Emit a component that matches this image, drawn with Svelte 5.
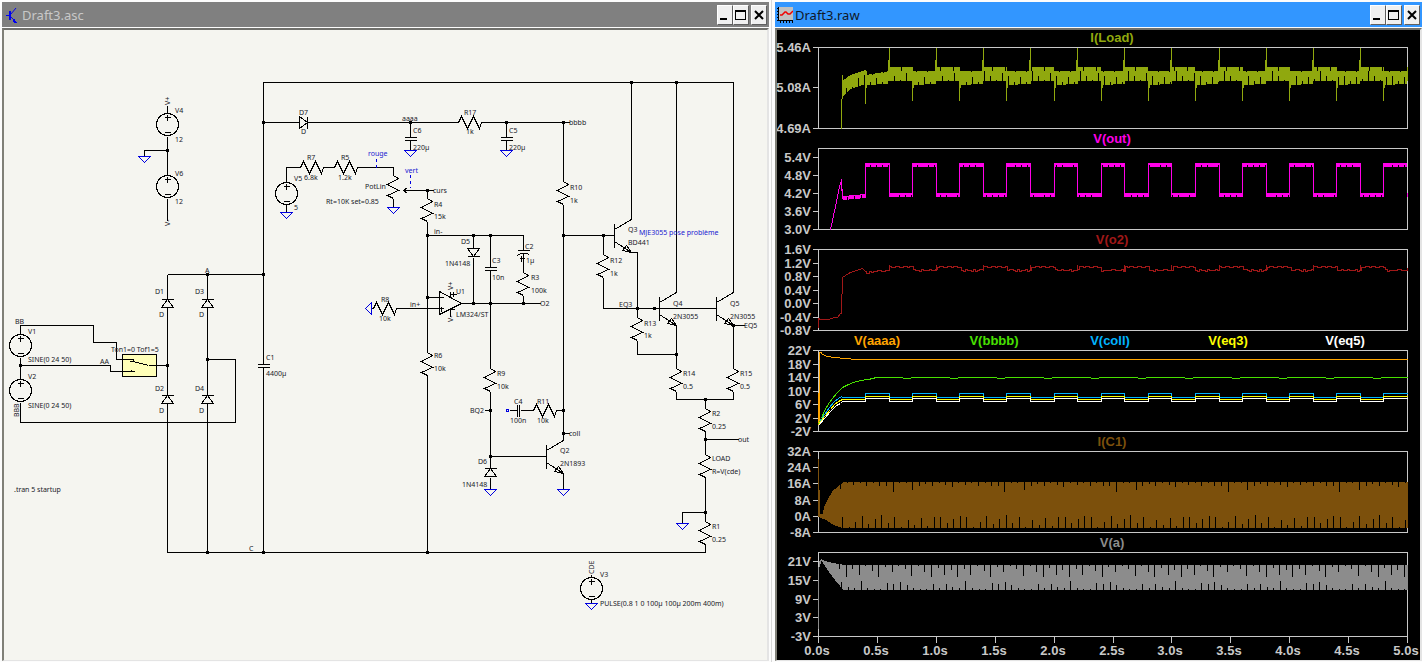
<script lang="ts">
  // ---------- schematic ----------
  const wires = [
    // supply V4 / V6
    'M167 105V113M167 136V175M167 150H144V156M167 198V220',
    // rectifier and transformer
    'M167 274H263M167 274V299M167 307V395M167 403V552H263M207 274V299M207 307V395M207 403V552',
    'M20 334V325H93V342H116V359H133M20 357V379M20 365H110V371H133M148 365H167M207 359H235V422H20V402',
    // rails
    'M263 364V82H733V292M263 367V552H705V543M631 82V219M676 82V292',
    // reference line
    'M263 122H299M307 122H458M481 122H569M410 122V137M410 140V150M506 122V137M506 140V150M563 122V181',
    'M286 182V167H300M323 167H334M357 167H393V175M393 198V207M286 204V212M403 190H433M427 190V198',
    // op-amp stage
    'M427 221V352M427 374V552M427 235H523V250M473 235V248M473 257V303M490 235V267M490 270V368M523 253V272M523 295V303',
    'M461 303H540M427 297H443M396 308H443M371 308H373M450 291V297M450 309V316',
    'M490 391V468M484 410H490M490 456H546M490 477V489M509 410H517M520 410H533M556 410H563',
    'M563 204V440M563 433H569M563 473V489',
    // output stage
    'M563 235H614M603 235V254M603 277V308H716M631 252H637V317M637 340V354H676M676 325V368M733 325V368M733 325H744',
    'M676 391V399H733V391M705 399V408M705 430V454M705 439H738M705 476V521M705 512H682V523',
    'M591 574V577M591 599V603'
  ];

  const nodes = [
    [167, 150], [263, 122], [263, 274], [207, 274], [167, 365], [207, 359], [20, 365],
    [207, 552], [263, 552], [427, 552], [410, 122], [506, 122], [563, 122], [427, 190],
    [427, 235], [473, 235], [490, 235], [427, 297], [473, 303], [490, 303], [523, 303],
    [490, 410], [490, 456], [563, 235], [563, 410], [563, 433], [603, 235], [637, 308],
    [654, 308], [676, 354], [733, 325], [705, 399], [705, 439], [705, 512], [631, 82], [676, 82]
  ];

  const resistorsV = [
    [427, 198], [427, 352], [490, 368], [523, 272], [563, 181], [603, 254], [637, 317],
    [676, 368], [733, 368], [705, 408], [705, 454], [705, 521], [393, 175]
  ];
  const resistorsH = [[458, 122], [300, 167], [334, 167], [373, 308], [533, 410]];
  const sources = [[167, 124], [167, 186], [20, 345], [20, 390], [286, 193], [591, 588]];
  const grounds = [
    [144, 156], [410, 150], [506, 150], [286, 212], [393, 207], [490, 489], [563, 489], [682, 523], [591, 603]
  ];
  const diodesUp = [[167, 299], [207, 299], [167, 395], [207, 395], [490, 468]];
  const transistors = [[546, 456], [614, 235], [659, 308], [716, 308]];
  const capacitors = [[410, 137], [506, 137], [490, 267], [263, 364]];

  type Label = [number, number, string];
  const labels: Label[] = [
    [175, 113, 'V4'], [175, 142, '12'], [175, 176, 'V6'], [175, 204, '12'],
    [205, 273, 'A'], [155, 294, 'D1'], [159, 317, 'D'], [195, 294, 'D3'], [199, 317, 'D'],
    [155, 391, 'D2'], [159, 413, 'D'], [195, 391, 'D4'], [199, 413, 'D'],
    [15, 324, 'BB'], [28, 334, 'V1'], [28, 362, 'SINE(0 24 50)'], [100, 364, 'AA'],
    [28, 379, 'V2'], [28, 408, 'SINE(0 24 50)'], [111, 352, 'Ton1=0 Tof1=5'],
    [14, 492, '.tran 5 startup'], [249, 551, 'C'], [266, 360, 'C1'], [266, 376, '4400µ'],
    [299, 115, 'D7'], [301, 134, 'D'], [402, 121, 'aaaa'], [413, 133, 'C6'], [413, 150, '220µ'],
    [509, 133, 'C5'], [509, 150, '220µ'], [464, 115, 'R17'], [466, 134, '1k'], [569, 125, 'bbbb'],
    [307, 160, 'R7'], [304, 180, '6.8k'], [294, 181, 'V5'], [294, 210, '5'], [341, 160, 'R5'],
    [338, 180, '1.2k'], [365, 189, 'PotLin'], [326, 204, 'Rt=10K set=0.85'], [433, 193, 'curs'],
    [434, 207, 'R4'], [434, 219, '15k'], [434, 234, 'in-'], [434, 358, 'R6'], [434, 371, '10k'],
    [461, 244, 'D5'], [445, 266, '1N4148'], [492, 263, 'C3'], [492, 280, '10n'], [525, 249, 'C2'],
    [526, 263, '1µ'], [531, 280, 'R3'], [531, 293, '100k'], [540, 306, 'O2'], [456, 294, 'U1'],
    [456, 317, 'LM324/ST'], [381, 302, 'R8'], [379, 321, '10k'], [410, 307, 'in+'],
    [497, 376, 'R9'], [497, 389, '10k'], [470, 413, 'BQ2'], [514, 404, 'C4'], [510, 423, '100n'],
    [537, 404, 'R11'], [537, 423, '10k'], [569, 436, 'coll'], [560, 453, 'Q2'], [560, 466, '2N1893'],
    [478, 464, 'D6'], [462, 487, '1N4148'], [570, 190, 'R10'], [570, 203, '1k'],
    [628, 232, 'Q3'], [628, 245, 'BD441'], [610, 263, 'R12'], [610, 276, '1k'], [619, 307, 'EQ3'],
    [644, 326, 'R13'], [644, 338, '1k'], [673, 306, 'Q4'], [673, 319, '2N3055'], [730, 306, 'Q5'],
    [730, 319, '2N3055'], [744, 328, 'EQ5'], [683, 376, 'R14'], [683, 389, '0.5'],
    [740, 376, 'R15'], [740, 389, '0.5'], [712, 416, 'R2'], [712, 429, '0.25'], [738, 442, 'out'],
    [712, 461, 'LOAD'], [712, 474, 'R=V(cde)'], [712, 529, 'R1'], [712, 542, '0.25'],
    [600, 577, 'V3'], [600, 606, 'PULSE(0.8 1 0 100µ 100µ 200m 400m)']
  ];
  const comments: Label[] = [
    [368, 156, 'rouge'], [405, 173, 'vert'], [639, 235, 'MJE3055 pose problème']
  ];
  const turned: Label[] = [
    [170, 105, 'V+'], [170, 226, 'V-'], [453, 290, 'V+'], [453, 322, 'V-'], [19, 417, 'BBB'], [594, 574, 'CDE']
  ];

  // ---------- waveforms ----------
  const X0 = 818;
  const X1 = 1407;
  const half = 589 / 25; // 0.2 s
  const edge = (k: number) => Math.round(X0 + k * half);

  type Panel = { top: number; bottom: number; ticks: [number, string][]; names: [number, string, string][] };
  const mid = 1112;
  const panels: Panel[] = [
    { top: 47, bottom: 128, ticks: [[47, '5.46A'], [87, '5.08A'], [128, '4.69A']], names: [[mid, 'I(Load)', '#90a80e']] },
    { top: 148, bottom: 229, ticks: [[157, '5.4V'], [175, '4.8V'], [193, '4.2V'], [211, '3.6V'], [229, '3.0V']], names: [[mid, 'V(out)', '#ff00e8']] },
    { top: 249, bottom: 330, ticks: [[249, '1.6V'], [263, '1.2V'], [276, '0.8V'], [290, '0.4V'], [303, '0.0V'], [317, '-0.4V'], [330, '-0.8V']], names: [[mid, 'V(o2)', '#a01818']] },
    {
      top: 350, bottom: 431,
      ticks: [[350, '22V'], [364, '18V'], [377, '14V'], [391, '10V'], [404, '6V'], [418, '2V'], [431, '-2V']],
      names: [[877, 'V(aaaa)', '#ffa500'], [994, 'V(bbbb)', '#48e000'], [1110, 'V(coll)', '#00b4ff'], [1228, 'V(eq3)', '#ffff00'], [1345, 'V(eq5)', '#ffffff']]
    },
    { top: 451, bottom: 532, ticks: [[451, '32A'], [467, '24A'], [483, '16A'], [500, '8A'], [516, '0A'], [532, '-8A']], names: [[mid, 'I(C1)', '#7c500c']] },
    { top: 552, bottom: 636, ticks: [[561, '21V'], [580, '15V'], [599, '9V'], [617, '3V'], [636, '-3V']], names: [[mid, 'V(a)', '#8c8c8c']] }
  ];
  const times = Array.from({ length: 11 }, (_, i) => ({ x: Math.round(X0 + i * 58.9), text: (i / 2).toFixed(1) + 's' }));

  function lerp(pts: number[][], x: number) {
    if (x <= pts[0][0]) return pts[0][1];
    for (let i = 1; i < pts.length; i++) {
      const [ax, ay] = pts[i - 1];
      const [bx, by] = pts[i];
      if (x <= bx) return ay + ((by - ay) * (x - ax)) / (bx - ax);
    }
    return pts[pts.length - 1][1];
  }

  // one vertical stroke for each pixel column between two envelopes
  function columns(from: number, to: number, span: (x: number) => number[]) {
    let d = '';
    for (let x = from; x <= to; x++) {
      const [a, b] = span(x);
      d += `M${x} ${Math.round(a)}V${Math.round(b)}`;
    }
    return d;
  }

  const beats = [9, 3, 7, 2, 10, 5, 1, 8];
  function loadTrace() {
    let d = 'M841 128V98M842 98V74';
    d += columns(843, X1, (x) => {
      const k = Math.floor((x - X0) / half);
      const cut = x % 6 === 0 ? beats[(x / 6) % beats.length] : 0;
      if (k < 2) return [lerp([[843, 79], [850, 74], [865, 69]], x), lerp([[843, 95], [850, 88], [865, 83]], x) - cut];
      if (k % 2 === 0) {
        const first = k === 2 ? [[866, 74], [889, 70]] : [[0, 70]];
        return [lerp(first, x) + (x % 11 === 3 ? 1 : 0), (x - edge(k) < 12 ? 84 : 83) - cut];
      }
      return [66 + (x % 13 === 4 ? 4 : 0), 80 - cut];
    });
    for (let k = 2; k < 25; k++) {
      const x = edge(k);
      if (k % 2) d += `M${x} 47V80M${x - 1} 59V80`;
      else d += `M${x} 70V${k === 2 ? 103 : 100}M${x + 1} 70V87`;
    }
    return d;
  }

  function outTrace() {
    let d = 'M830 229V226M831 226V222M832 222V217M833 217V212M834 212V208M835 208V203M836 203V198M837 198V193M838 193V188M839 188V184M840 184V181M841 178V190M842 188V198';
    d += columns(843, X1, (x) => {
      const k = Math.floor((x - X0) / half);
      if (k < 2) return [lerp([[843, 195], [865, 193]], x), lerp([[843, 199], [865, 197]], x) - (x % 7 === 0 ? 3 : 0)];
      const gap = (x * 5) % 29 < 4 ? 2 : 0;
      return k % 2 === 0 ? [162, 166 - gap] : [192, 196 - gap];
    });
    for (let k = 2; k < 25; k++) d += `M${edge(k)} 162V196`;
    return d;
  }

  function o2Trace() {
    let d = 'M818 327V318L820 319H828L834 317H837L840 313H841V311L842 277L845 275L850 272L856 270L862 268L865 271H866V273';
    for (let x = 867; x <= X1; x += 2) {
      const k = Math.floor((x - X0) / half);
      const wiggle = (x * 7) % 11 < 5 ? 1 : 0;
      const y = k % 2 ? 266 + wiggle : (k === 2 ? Math.round(lerp([[866, 272], [889, 270]], x)) : 270) - wiggle + ((x * 3) % 13 < 4 ? 1 : 0);
      d += `H${x}V${y}`;
      if ((x * 5) % 17 < 7) d += `V${y - 1}V${y}`;
    }
    for (let k = 3; k < 25; k += 2) d += `M${edge(k)} 264V270`;
    return d;
  }

  function square(start: string, high: number, low: number) {
    let d = start + `V${low}`;
    for (let k = 2; k < 25; k++) d += `H${edge(k)}V${k % 2 ? low : high}`;
    return d.replace(/V\d+$/, `V${high}`) + `H${X1}`;
  }

  function bbbbTrace() {
    let d = 'M818 424L821 418L824 410L829 402L836 393L842 387L848 384L853 382L860 380L868 379L876 377';
    for (let x = 900; x < X1 - 20; x += 47) d += `H${x + 1}L${x + 4} 378H${x + 9}L${x + 12} 377`;
    return d + `H${X1}`;
  }

  // ripple filled solid, nicked by the sampling beat at a steady step
  function ripple(from: number, top: number[][], bottom: number[][], nicksTop: number[], nicksBottom: number[], first: number) {
    const cutTop = new Map<number, number>();
    const cutBottom = new Map<number, number>();
    for (let i = 0; first + i * 6.57 < X1; i++) {
      cutTop.set(Math.round(first + i * 6.57), nicksTop[i % nicksTop.length]);
      cutBottom.set(Math.round(first + 2 + i * 6.55), nicksBottom[i % nicksBottom.length]);
    }
    return columns(from, X1, (x) => [lerp(top, x) + (cutTop.get(x) ?? 0), lerp(bottom, x) - (cutBottom.get(x) ?? 0)]);
  }

  const c1 = 'M818 458V516M819 489V516' + ripple(
    820,
    [[820, 513], [822, 513], [824, 505], [828, 497], [832, 490], [838, 485], [843, 481]],
    [[820, 517], [824, 518], [830, 522], [836, 525], [842, 527]],
    [5, 1, 3, 1, 4, 1, 4, 4, 10, 1, 1, 8, 4, 2, 4, 1, 3], [11, 1, 6, 12, 4, 9, 13, 5, 11, 1, 8, 3, 10, 2, 11, 11, 5, 9, 12], 840
  );
  const va = 'M818 566V628' + ripple(
    819,
    [[819, 560], [821, 558], [825, 560], [832, 562], [845, 564]],
    [[819, 566], [821, 560], [824, 564], [830, 573], [836, 581], [843, 589]],
    [5, 12, 4, 10, 1, 6, 12, 2, 7, 1, 4, 11, 1, 7, 12, 3, 10], [6, 3, 2, 9, 2, 1, 1, 7, 6, 8, 5, 2, 1, 1, 6, 2], 839
  );

  const traces = [
    [loadTrace(), '#90a80e'],
    [outTrace(), '#ff00e8'],
    [o2Trace(), '#a01818'],
    ['M818 424V392M819 424V352H821V353L826 356H829L832 357H838L841 358H848L853 359H' + X1, '#ffa500'],
    [bbbbTrace(), '#48e000'],
    [square('M818 424L824 414L829 407L834 401L838 398L841 396L842 397', 393, 397), '#00b4ff'],
    [square('M818 424L824 416L830 409L834 404L838 401L842 399', 396, 399), '#ffff00'],
    [square('M818 425L824 418L830 411L836 405L840 403L842 401', 398, 401), '#ffffff'],
    [c1, '#7c500c'],
    [va, '#8c8c8c']
  ];
</script>

{#snippet windowButtons()}
  <div class="buttons">
    <button type="button" aria-label="Minimize">
      <svg viewBox="0 0 14 18"><path d="M2 13H9" stroke="#000" stroke-width="2" /></svg>
    </button>
    <button type="button" aria-label="Maximize">
      <svg viewBox="0 0 14 18">
        <rect x="1" y="4" width="11" height="10" fill="#000" />
        <rect x="2" y="6" width="9" height="7" fill="#f0f0f0" />
      </svg>
    </button>
    <button type="button" class="close" aria-label="Close">
      <svg viewBox="0 0 14 18"><path class="smooth" d="M3 5L11 13M11 5L3 13" stroke="#000" stroke-width="2" /></svg>
    </button>
  </div>
{/snippet}

<main class="desktop">
  <section class="window">
    <header class="title-bar">
      <svg class="icon" viewBox="0 0 16 16" aria-hidden="true">
        <g fill="#0000f0">
          <rect x="2" y="8" width="3" height="1" />
          <rect x="5" y="4" width="2" height="9" />
          <path d="M9 14L11 11V13L13 16H10Z" />
        </g>
        <path class="smooth" d="M7 7L12 1M7 10L12 15" stroke="#0000f0" fill="none" />
      </svg>
      <h1>Draft3.asc</h1>
      {@render windowButtons()}
    </header>
    <svg class="canvas schematic" viewBox="4 30 763 630" role="img" aria-label="Schematic">
      <g class="lines" transform="translate(0.5 0.5)">
        <rect x="122" y="354" width="34" height="22" fill="#ffffb8" />
        <path d={wires.join('')} />
        {#each resistorsV as [x, y]}
          <path d="M{x} {y}l5 3l-11 6l11 6l-11 5l6 3" />
        {/each}
        {#each resistorsH as [x, y]}
          <path d="M{x} {y}l3 -6l6 12l6 -12l6 12l2 -6" />
        {/each}
        {#each sources as [x, y]}
          <circle cx={x} cy={y} r="11" />
          <path d="M{x - 3} {y - 7}h6m-3 -3v6M{x - 3} {y + 8}h6" />
        {/each}
        {#each capacitors as [x, y]}
          <path class="clear" d="M{x} {y + 1}v2" />
          <path d="M{x - 6} {y}h12m0 3h-12" />
        {/each}
        {#each diodesUp as [x, y]}
          <path d="M{x - 6} {y}h12M{x} {y}l-6 8h12z" />
        {/each}
        <path d="M467 256h12M473 256l-6 -8h12z" />
        <path d="M307 116v12M307 122l-8 -6v12z" />
        {#each transistors as [x, y]}
          <path d="M{x} {y - 12}v24M{x} {y - 6}l17 -10M{x} {y + 6}l17 11l-5 -7l-4 5l9 2" />
        {/each}
        <!-- op-amp, polarised and series capacitors, switch, wiper -->
        <path d="M439 291V314L461 303ZM441 306V311M453 291V296M450 294H456M450 309H454" />
        <path d="M517 250H529M517 255L520 253H527L529 255M519 258H524M521 255V261" />
        <path d="M517 404V416M519 404V416" />
        <path d="M129 361L133 361L148 365M133 359V361M129 371H134M131 369V371M407 187L403 190L407 193" />
        {#each nodes as [x, y]}
          <rect class="node" x={x - 1} y={y - 1} width="2" height="2" />
        {/each}
        <g class="blue">
          {#each grounds as [x, y]}
            <path d="M{x - 6} {y}h12l-6 6z" />
          {/each}
          <path d="M371 302v12l-6 -6z" />
          <rect x="506" y="409" width="2" height="2" />
          <path stroke-dasharray="3 3" d="M376 158V167M410 174V187" />
        </g>
      </g>
      <g class="labels">
        {#each labels as [x, y, text]}
          <text {x} {y}>{text}</text>
        {/each}
        {#each turned as [x, y, text]}
          <text transform="translate({x} {y}) rotate(-90)">{text}</text>
        {/each}
        {#each comments as [x, y, text]}
          <text class="comment" {x} {y}>{text}</text>
        {/each}
      </g>
    </svg>
  </section>

  <section class="window active">
    <header class="title-bar">
      <svg class="icon" viewBox="0 0 16 16" aria-hidden="true">
        <rect x="2" y="0" width="14" height="13" fill="#c0c0c0" />
        <g fill="#000">
          <rect x="1" y="0" width="1" height="14" />
          <rect x="1" y="13" width="15" height="1" />
          {#each [1, 4, 7, 10, 13] as p}
            <rect x="0" y={p} width="1" height="1" />
            <rect x={p + 2} y="14" width="1" height="2" />
          {/each}
        </g>
        <path class="smooth" d="M3 8L5 8L8 5H9L11 7L13 7L16 4" stroke="#f00000" stroke-width="1.5" fill="none" />
      </svg>
      <h1>Draft3.raw</h1>
      {@render windowButtons()}
    </header>
    <svg class="canvas plots" viewBox="777 30 643 630" role="img" aria-label="Waveforms">
      <g class="lines" transform="translate(0.5 0.5)">
        {#each panels as p}
          <rect x={X0} y={p.top} width={X1 - X0} height={p.bottom - p.top} />
          {#each p.ticks as [y]}
            <path d="M812 {y}H818" />
          {/each}
        {/each}
        {#each times as t}
          <path d="M{t.x} 636V642" />
        {/each}
        {#each traces as [d, color]}
          <path {d} stroke={color} />
        {/each}
      </g>
      <g class="axis">
        {#each panels as p}
          {#each p.ticks as [y, text]}
            <text class="value" x="811" y={y + 5}>{text}</text>
          {/each}
          {#each p.names as [x, text, color]}
            <text {x} y={p.top - 5} fill={color}>{text}</text>
          {/each}
        {/each}
        {#each times as t}
          <text x={t.x - 1} y="655">{t.text}</text>
        {/each}
      </g>
    </svg>
  </section>
</main>

<style>
  :global(body) {
    background: #fcfcfc;
  }

  .desktop {
    display: grid;
    grid-template-columns: 772fr 650fr;
    font-family: "Noto Sans", "Open Sans", sans-serif;
  }

  .window {
    min-width: 0;
    padding: 2px 2px 1px 2px;
    border-right: 1px solid #d8d8d8;
  }

  .window.active {
    padding: 2px 0 1px 3px;
    border-right: 0;
  }

  .title-bar {
    display: flex;
    align-items: center;
    height: 25px;
    margin-bottom: 1px;
    padding: 0 2px;
    background: #808080;
    color: #c8c8c8;
  }

  .active .title-bar {
    background: #3296ff;
    color: #101828;
  }

  .icon {
    width: 16px;
    height: 16px;
    margin-right: 2px;
    shape-rendering: crispEdges;
  }

  h1 {
    flex: 1;
    margin: 0;
    font-size: 13px;
    line-height: 20px;
    font-weight: 400;
  }

  .buttons {
    display: flex;
  }

  button {
    width: 16px;
    height: 20px;
    padding: 0;
    border: 1px solid;
    border-color: #ffffff #606060 #606060 #ffffff;
    background: #f0f0f0;
  }

  button svg {
    display: block;
    width: 14px;
    height: 18px;
    shape-rendering: crispEdges;
  }

  .close {
    margin-left: 2px;
  }

  .smooth {
    shape-rendering: auto;
  }

  .canvas {
    display: block;
    box-sizing: border-box;
    width: 100%;
    border: 2px solid;
    border-color: #70706c #e4e4e4 #e4e4e4 #808078;
    border-bottom-width: 1px;
  }

  .schematic {
    background: #f5f5f0;
  }

  .plots {
    background: #000000;
  }

  .lines {
    fill: none;
    stroke: #000000;
    stroke-width: 1;
    shape-rendering: crispEdges;
  }

  .plots .lines {
    stroke: #c8c8c8;
  }

  .lines .node {
    fill: #000000;
  }

  .lines .clear {
    stroke: #f5f5f0;
  }

  .blue {
    stroke: #0000e0;
  }

  .labels {
    font-size: 7px;
    fill: #202028;
  }

  .comment {
    fill: #2020d0;
  }

  .axis {
    font-family: "Liberation Sans", Arial, sans-serif;
    font-size: 13px;
    font-weight: 700;
    fill: #c8c8c8;
    text-anchor: middle;
  }

  .axis .value {
    text-anchor: end;
  }
</style>
